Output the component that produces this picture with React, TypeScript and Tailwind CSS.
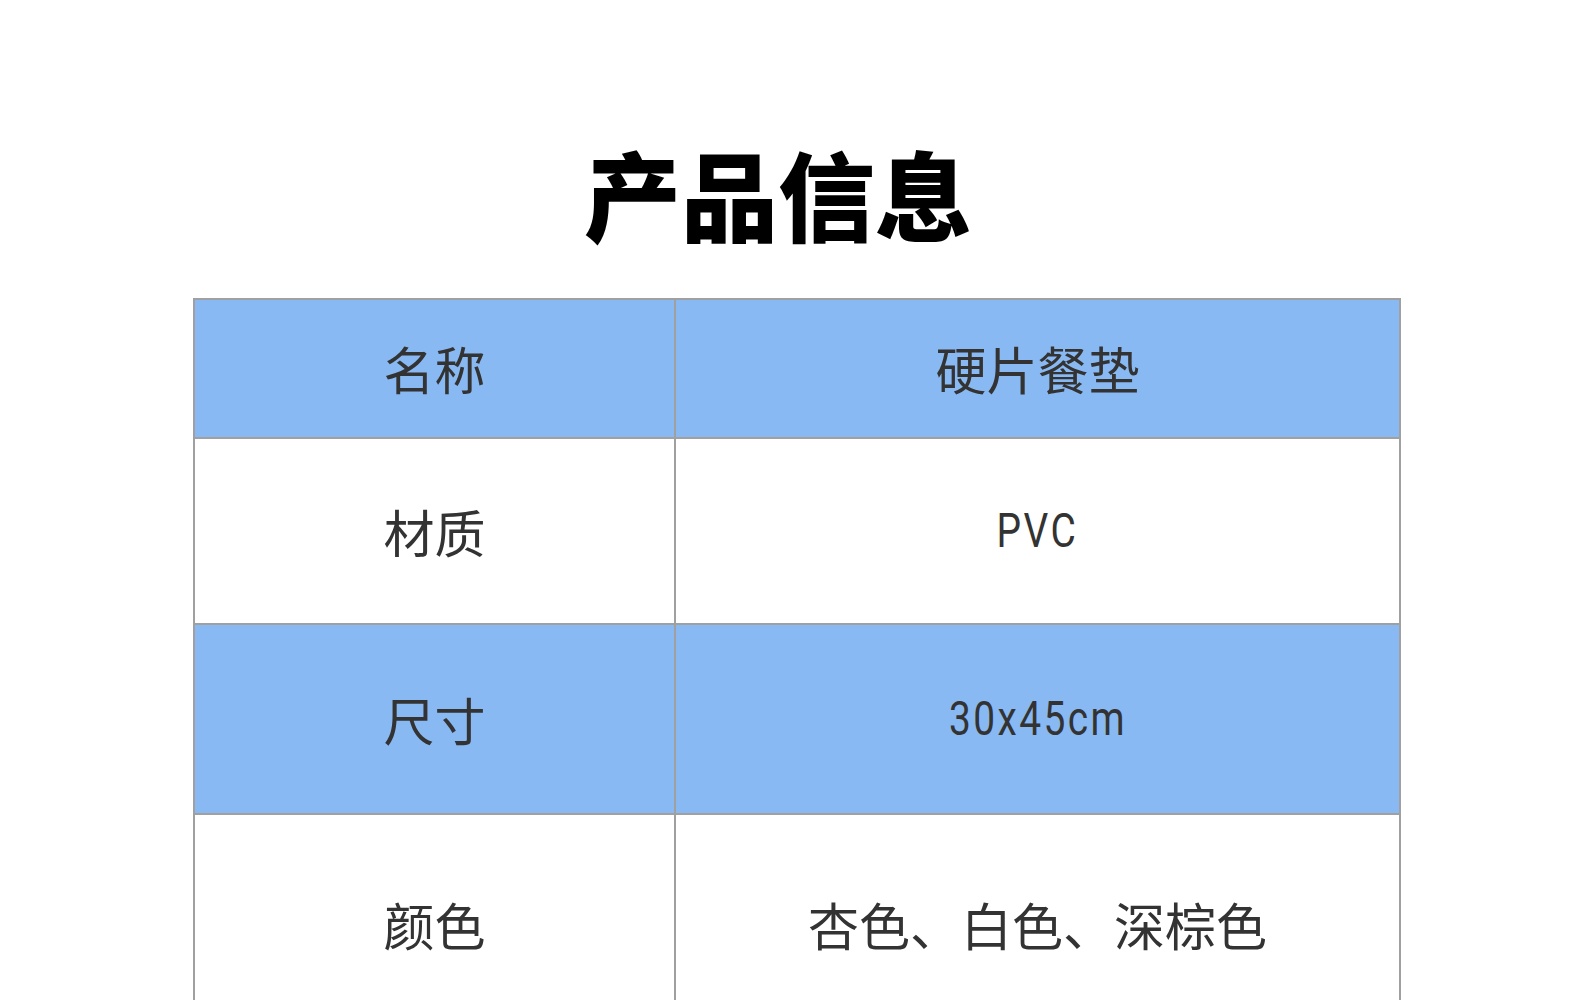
import React from "react";

const rows = [
  { k: "名称", v: "硬片餐垫", latin: false, blue: true, h: "h-[139px]" },
  { k: "材质", v: "PVC", latin: true, blue: false, h: "h-[186px]" },
  { k: "尺寸", v: "30x45cm", latin: true, blue: true, h: "h-[190px]" },
  { k: "颜色", v: "杏色、白色、深棕色", latin: false, blue: false, h: "h-[220px]" },
];

export default function App() {
  return (
    <div
      className="w-[1580px] h-[1000px] overflow-hidden bg-white"
      style={{ fontFamily: '"Noto Sans CJK SC", "Noto Sans", sans-serif' }}
    >
      <div className="h-[298px] flex items-start justify-center pt-[124px] pr-[24px]">
        <h1 className="text-[97px] leading-[136px] font-black text-black">产品信息</h1>
      </div>
      <div className="ml-[193px] w-[1208px] border-t-2 border-l-2 border-[#a0a0a0]">
        {rows.map((r) => (
          <div
            key={r.k}
            className={`grid grid-cols-[481px_1fr] ${r.h} ${r.blue ? "bg-[#89b9f2]" : "bg-white"} border-b-2 border-[#a0a0a0]`}
          >
            <div className="flex items-center justify-center border-r-2 border-[#a0a0a0] text-[51px] text-[#333333]">
              {r.k}
            </div>
            {r.latin ? (
              <div className="flex items-center justify-center border-r-2 border-[#a0a0a0] text-[#333333]">
                <span
                  className="inline-block text-[48px] tracking-[3px] scale-x-[0.81] origin-center"
                  style={{ fontFamily: 'Roboto, "Liberation Sans", sans-serif' }}
                >
                  {r.v}
                </span>
              </div>
            ) : (
              <div className="flex items-center justify-center border-r-2 border-[#a0a0a0] text-[51px] text-[#333333]">
                {r.v}
              </div>
            )}
          </div>
        ))}
      </div>
    </div>
  );
}
